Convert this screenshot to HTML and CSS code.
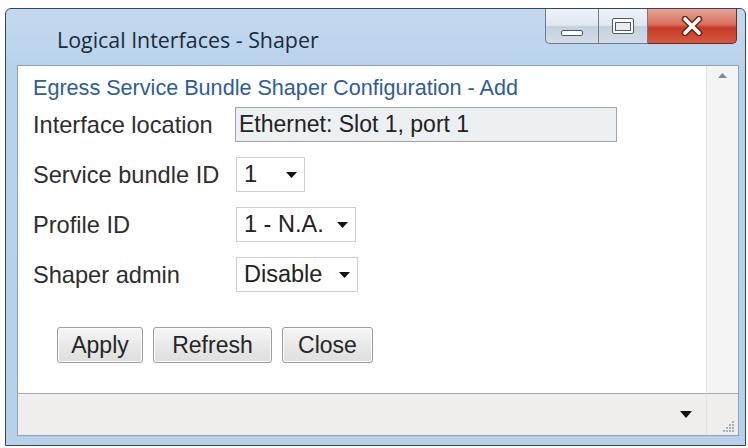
FILE: index.html
```html
<!DOCTYPE html>
<html>
<head>
<meta charset="utf-8">
<link rel="stylesheet" href="styles.css">
</head>
<body>
<div class="window">
  <div class="titlebar">
    <div class="title">Logical Interfaces - Shaper</div>
    <div class="caption-btns">
      <div class="cbtn min"><span class="min-glyph"></span></div>
      <div class="cbtn max">
        <svg width="22" height="16" viewBox="0 0 22 16"><rect x="0.5" y="0.5" width="21" height="15" rx="1.5" fill="#fff" stroke="#4e5a67"/><rect x="3.5" y="4.5" width="15" height="8" fill="#e9edf1" stroke="#4e5a67"/></svg>
      </div>
      <div class="cbtn close">
        <svg width="24" height="20" viewBox="0 0 24 20"><path d="M5 3 L19 17 M19 3 L5 17" stroke="#6a2218" stroke-width="6.5" stroke-linecap="round"/><path d="M5 3 L19 17 M19 3 L5 17" stroke="#fff" stroke-width="3.6" stroke-linecap="round"/></svg>
      </div>
    </div>
  </div>
  <div class="panel">
    <div class="content">
      <div class="heading">Egress Service Bundle Shaper Configuration - Add</div>
      <div class="form">
        <div class="label">Interface location</div>
        <div class="input">Ethernet: Slot 1, port 1</div>
        <div class="label">Service bundle ID</div>
        <div class="select w1"><span>1</span><svg class="arrow" width="11" height="6" viewBox="0 0 11 6"><path d="M0 0 H11 L5.5 6 Z" fill="#111"/></svg></div>
        <div class="label">Profile ID</div>
        <div class="select w2"><span>1 - N.A.</span><svg class="arrow" width="11" height="6" viewBox="0 0 11 6"><path d="M0 0 H11 L5.5 6 Z" fill="#111"/></svg></div>
        <div class="label">Shaper admin</div>
        <div class="select w3"><span>Disable</span><svg class="arrow" width="11" height="6" viewBox="0 0 11 6"><path d="M0 0 H11 L5.5 6 Z" fill="#111"/></svg></div>
      </div>
      <div class="buttons">
        <div class="btn b-apply">Apply</div>
        <div class="btn b-refresh">Refresh</div>
        <div class="btn b-close">Close</div>
      </div>
    </div>
    <div class="vscroll">
      <svg width="9" height="5" viewBox="0 0 9 5"><path d="M0 5 L4.5 0 L9 5 Z" fill="#8a8a8a"/></svg>
    </div>
    <div class="status">
      <svg width="12" height="7" viewBox="0 0 12 7"><path d="M0 0 H12 L6 7 Z" fill="#111"/></svg>
    </div>
    <div class="grip">
      <svg width="12" height="12" viewBox="0 0 12 12">
        <g fill="#a9b0b8">
          <rect x="9" y="1" width="2" height="2"/>
          <rect x="6" y="4" width="2" height="2"/><rect x="9" y="4" width="2" height="2"/>
          <rect x="3" y="7" width="2" height="2"/><rect x="6" y="7" width="2" height="2"/><rect x="9" y="7" width="2" height="2"/>
          <rect x="0" y="10" width="2" height="2"/><rect x="3" y="10" width="2" height="2"/><rect x="6" y="10" width="2" height="2"/><rect x="9" y="10" width="2" height="2"/>
        </g>
      </svg>
    </div>
  </div>
</div>
</body>
</html>
```
FILE: styles.css
```css
html, body {
  margin: 0;
  padding: 0;
  background: #fff;
}

.window {
  box-sizing: border-box;
  margin: 8px 0 0 5px;
  width: 741px;
  height: 438px;
  border: 1px solid #3a4553;
  border-radius: 6px 6px 0 0;
  background: linear-gradient(#c3d9ef, #b9d2eb 60px, #b8d1ea);
  display: flex;
  flex-direction: column;
}

.titlebar {
  height: 56px;
  flex: none;
  display: flex;
  align-items: flex-start;
  padding: 0 8px 0 51px;
}

.title {
  margin-top: 17px;
  font-family: "Open Sans", "Noto Sans", sans-serif;
  font-size: 21.4px;
  line-height: 27px;
  color: #1c2a3a;
}

.caption-btns {
  margin-left: auto;
  display: flex;
  height: 35px;
}

.cbtn {
  box-sizing: border-box;
  height: 35px;
  display: flex;
  align-items: center;
  justify-content: center;
  border: 1px solid #6d7c8c;
  border-top: none;
}

.min, .max {
  background: linear-gradient(#eef3f8 0%, #dfe7f0 48%, #c5d1de 52%, #d3dde8 100%);
}

.min {
  width: 53px;
  border-radius: 0 0 0 5px;
  border-right: none;
  align-items: flex-end;
  padding-bottom: 7px;
}

.min-glyph {
  display: block;
  box-sizing: border-box;
  width: 22px;
  height: 6px;
  border: 1px solid #4e5a67;
  border-radius: 2px;
  background: #fff;
}

.max {
  width: 50px;
}

.close {
  width: 89px;
  border-left: none;
  border-color: #6b2a22;
  border-radius: 0 0 5px 0;
  background: linear-gradient(#e8a496 0%, #d7705d 45%, #c63b26 55%, #d5583f 100%);
}

.panel {
  flex: 1;
  margin: 0 6px 9px 11px;
  border: 1px solid #8fa3b9;
  background: #fff;
  display: grid;
  grid-template-columns: 1fr 32px;
  grid-template-rows: 1fr 42px;
}

.content {
  padding: 10px 0 0 15px;
  font-family: "Liberation Sans", Arial, sans-serif;
}

.heading {
  font-size: 21.6px;
  line-height: 24px;
  color: #2d5d9a;
}

.form {
  margin-top: 7px;
  display: grid;
  grid-template-columns: 200px max-content;
  grid-auto-rows: 35px;
  row-gap: 15px;
  align-items: center;
}

.label {
  font-size: 23.6px;
  line-height: 28px;
  color: #2e2e2e;
}

.input {
  box-sizing: border-box;
  margin-left: 2px;
  width: 382px;
  height: 35px;
  border: 1px solid #a2a6aa;
  background: #edf0f3;
  padding-left: 3px;
  font-size: 23px;
  line-height: 33px;
  color: #222;
}

.select {
  box-sizing: border-box;
  margin-left: 3px;
  height: 35px;
  border: 1px solid #d0d0d0;
  background: #fff;
  display: flex;
  align-items: center;
  padding: 0 7px 0 7px;
  font-size: 23.5px;
  color: #222;
}

.select .arrow {
  margin-left: auto;
}

.w1 { width: 69px; }
.w2 { width: 120px; }
.w3 { width: 122px; }

.buttons {
  margin: 35px 0 0 24px;
  display: flex;
  gap: 10px;
}

.btn {
  box-sizing: border-box;
  height: 36px;
  border: 1px solid #9d9d9d;
  border-radius: 3px;
  background: linear-gradient(#f7f7f7, #e9e9e9 50%, #dedede);
  box-shadow: inset 0 0 0 1px #fbfbfb;
  font-size: 23px;
  line-height: 34px;
  text-align: center;
  color: #262626;
}

.b-apply { width: 86px; }
.b-refresh { width: 119px; }
.b-close { width: 91px; }

.vscroll {
  background: #f4f4f4;
  border-left: 1px solid #e2e2e2;
  display: flex;
  justify-content: center;
  padding-top: 7px;
}

.status {
  background: #f0eeec;
  border-top: 1px solid #a9a9a9;
  display: flex;
  align-items: center;
  justify-content: flex-end;
  padding-right: 14px;
}

.grip {
  background: #f0eeec;
  border-top: 1px solid #a9a9a9;
  border-left: 1px solid #e2e2e2;
  display: flex;
  align-items: flex-end;
  justify-content: flex-end;
  padding: 0 3px 3px 0;
}
```
